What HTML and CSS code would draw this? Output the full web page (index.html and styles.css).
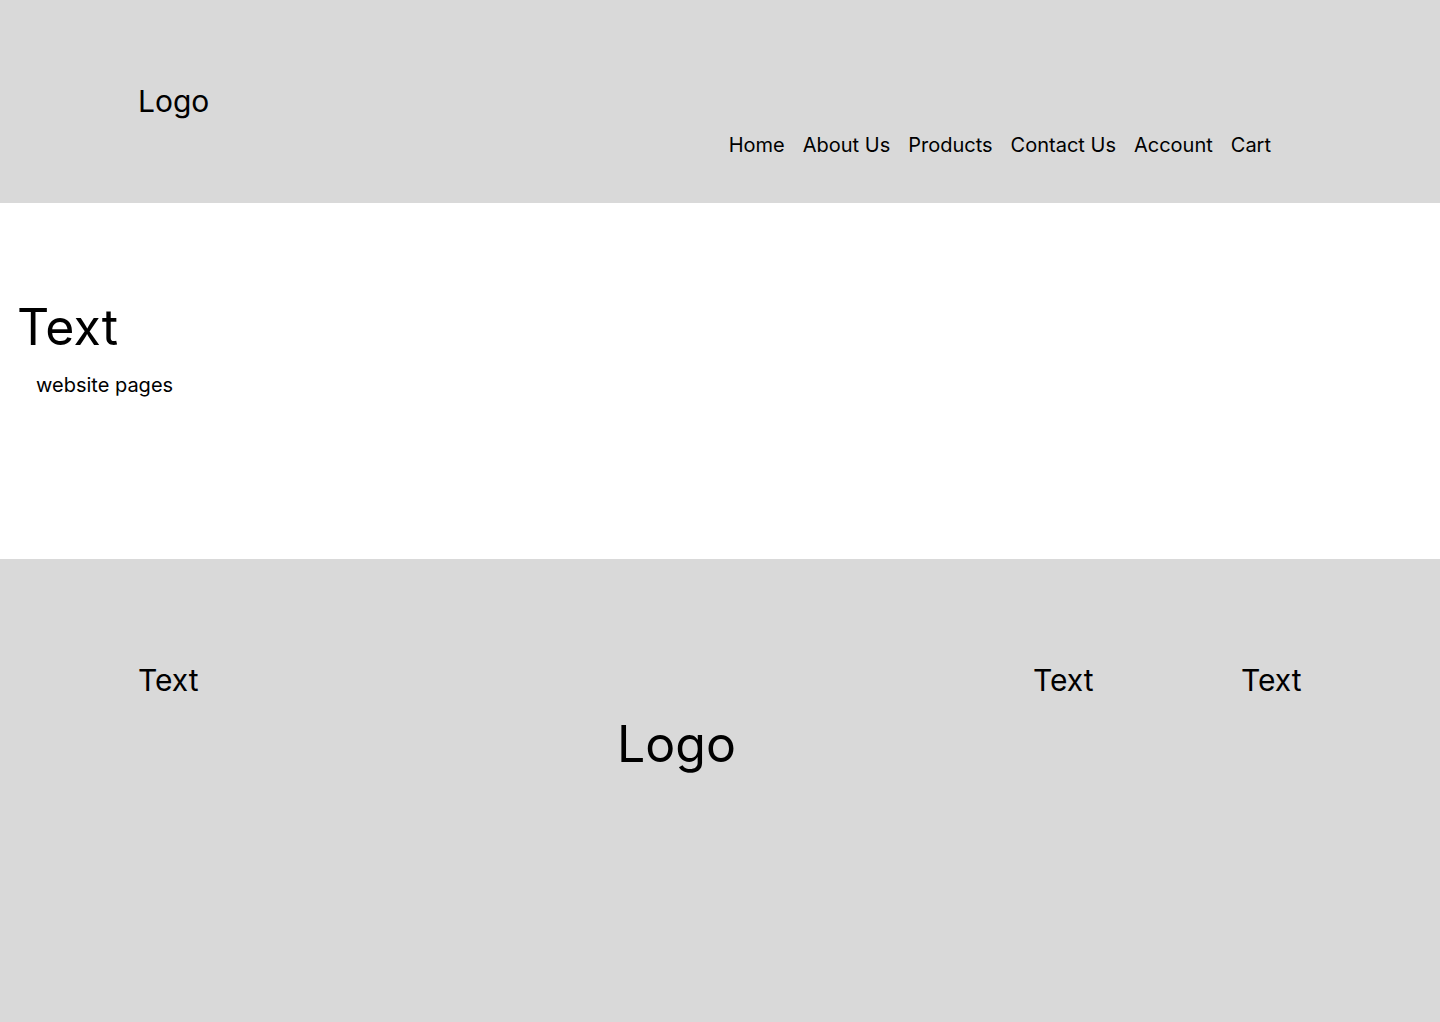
FILE: index.html
```html
<!DOCTYPE html>
<html>
  <head>
    <link rel="stylesheet" href="styles.css">
  </head>
  <body>
    <div class='header'>
      <div class='logo'>Logo</div>
      <nav class='nav'>
        <a href='#'>Home</a>
        <a href='#'>About Us</a>
        <a href='#'>Products</a>
        <a href='#'>Contact Us</a>
        <a href='#'>Account</a>
        <a href='#'>Cart</a>
      </nav>
    </div>

    <div class='hero'>
      <h1>Text</h1>
      <p>website pages</p>
    </div>

    <div class='footer'>
      <div class='footer-text'>Text</div>
      <div class='footer-logo'>Logo</div>
      <div class='footer-text'>Text</div>
      <div class='footer-text'>Text</div>
    </div>
  </body>
</html>
```

FILE: styles.css
```css
body{
  margin:0;
  font-family:Inter,'Noto Sans',sans-serif;
  color:#000;
  background-color:#fff;
}

.header{
  background-color:#d9d9d9;
  height:203px;
  display:flex;
  justify-content:space-between;
  align-items:center;
  padding:0 169px 0 138px;
  box-sizing:border-box;
}
.logo{
  font-size:30px;
  line-height:36px;
  margin-bottom:2px;
}
.nav{
  display:flex;
  gap:18px;
  align-self:flex-end;
  padding-bottom:46px;
}
.nav a{
  color:#000;
  text-decoration:none;
  font-size:20px;
  line-height:24px;
}

.hero{
  height:356px;
  box-sizing:border-box;
  padding:94px 0 0 17px;
}
.hero h1{
  margin:0;
  font-size:50px;
  font-weight:400;
  line-height:60px;
}
.hero p{
  margin:16px 0 0 19px;
  font-size:20px;
  line-height:24px;
}

.footer{
  background-color:#d9d9d9;
  height:463px;
  box-sizing:border-box;
  padding:103px 0 0 138px;
  display:grid;
  grid-template-columns:479px 416px 208px auto;
  align-items:start;
}
.footer-text{
  font-size:30px;
  line-height:36px;
}
.footer-logo{
  font-size:50px;
  line-height:60px;
  margin-top:52px;
}
```
